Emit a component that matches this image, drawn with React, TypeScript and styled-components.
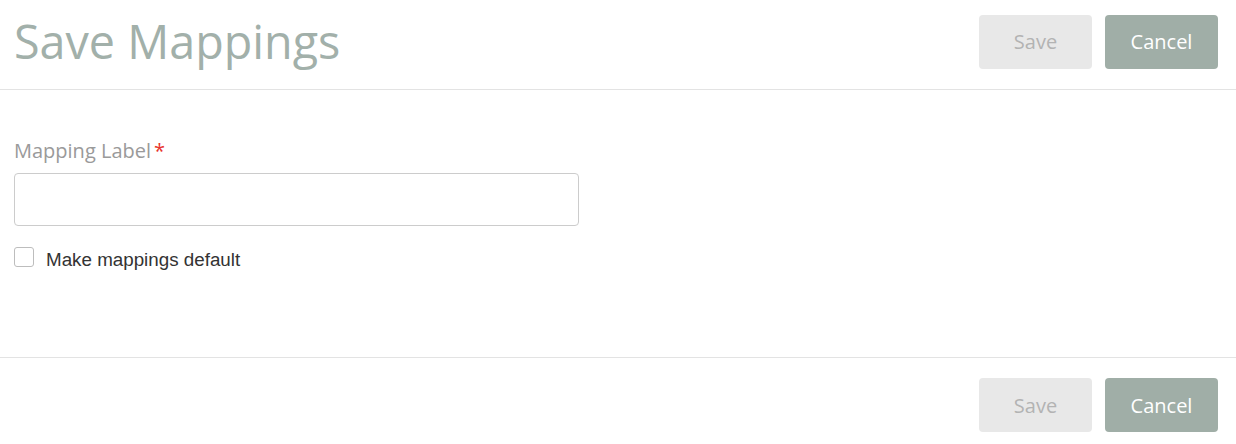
import React from 'react';
import styled, { createGlobalStyle } from 'styled-components';

const GlobalStyle = createGlobalStyle`
  html, body {
    margin: 0;
    padding: 0;
    background: #ffffff;
  }
`;

const Page = styled.div`
  width: 1236px;
  height: 444px;
  display: flex;
  flex-direction: column;
  font-family: 'Open Sans', sans-serif;
  background: #ffffff;
`;

const Header = styled.div`
  height: 90px;
  box-sizing: border-box;
  display: flex;
  align-items: center;
  justify-content: space-between;
  padding: 0 18px 6px 14px;
  border-bottom: 1px solid #e3e3e3;
`;

const Title = styled.h1`
  margin: 0;
  font-family: 'Open Sans', sans-serif;
  font-weight: 400;
  font-size: 46.7px;
  line-height: 1;
  color: #a2b0aa;
`;

const Actions = styled.div`
  display: flex;
  gap: 13px;
`;

const Button = styled.button<{ $primary?: boolean }>`
  width: 113px;
  height: 54px;
  border: none;
  border-radius: 4px;
  font-family: 'Open Sans', sans-serif;
  font-size: 20px;
  cursor: ${p => (p.$primary ? 'pointer' : 'default')};
  background: ${p => (p.$primary ? '#a0aea7' : '#e8e8e8')};
  color: ${p => (p.$primary ? '#ffffff' : '#b3b3b3')};
`;

const Body = styled.div`
  flex: 1;
  padding: 47px 14px 0 14px;
  border-bottom: 1px solid #e3e3e3;
`;

const Label = styled.label`
  display: block;
  font-size: 20px;
  color: #9a9a9a;
  line-height: 28px;
  margin-bottom: 8px;
`;

const Required = styled.span`
  color: #e8322a;
  margin-left: 3px;
`;

const TextInput = styled.input`
  display: block;
  box-sizing: border-box;
  width: 565px;
  height: 53px;
  border: 1px solid #cccccc;
  border-radius: 4px;
  padding: 0 12px;
  font-size: 18px;
  font-family: 'Open Sans', sans-serif;
  outline: none;
`;

const CheckRow = styled.label`
  display: flex;
  align-items: flex-start;
  gap: 12px;
  margin-top: 22px;
  font-family: 'Liberation Sans', Arial, sans-serif;
  font-size: 18.8px;
  line-height: 24px;
  color: #333333;
`;

const Box = styled.span`
  width: 18px;
  height: 18px;
  margin-top: -1px;
  border: 1px solid #bdbdbd;
  border-radius: 3px;
  background: #ffffff;
`;

const Footer = styled.div`
  height: 86px;
  box-sizing: border-box;
  display: flex;
  justify-content: flex-end;
  align-items: flex-start;
  padding: 20px 18px 0 0;
`;

export default function App() {
  return (
    <Page>
      <GlobalStyle />
      <Header>
        <Title>Save Mappings</Title>
        <Actions>
          <Button>Save</Button>
          <Button $primary>Cancel</Button>
        </Actions>
      </Header>
      <Body>
        <Label>
          Mapping Label<Required>*</Required>
        </Label>
        <TextInput />
        <CheckRow>
          <Box />
          Make mappings default
        </CheckRow>
      </Body>
      <Footer>
        <Actions>
          <Button>Save</Button>
          <Button $primary>Cancel</Button>
        </Actions>
      </Footer>
    </Page>
  );
}
